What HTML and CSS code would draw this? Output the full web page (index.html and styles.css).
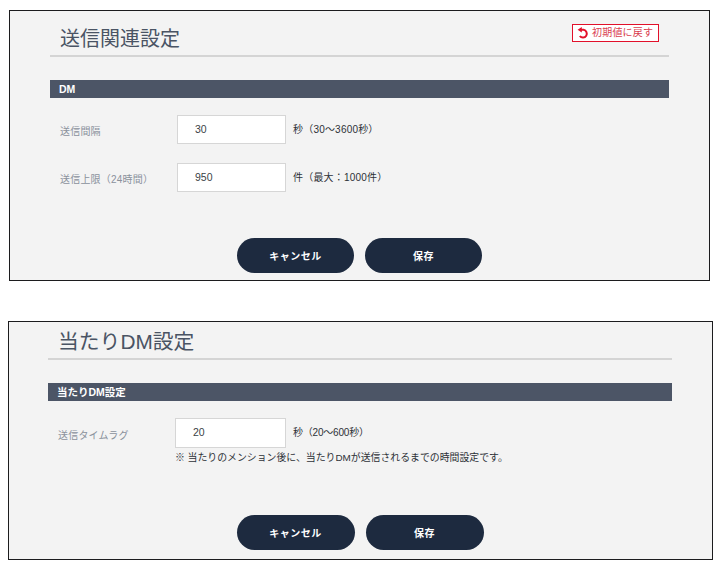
FILE: index.html
```html
<!DOCTYPE html>
<html lang="ja">
<head>
<meta charset="utf-8">
<title>送信関連設定</title>
<link rel="stylesheet" href="styles.css">
</head>
<body>
<section class="panel panel-send">
  <header class="head">
    <h1 class="title">送信関連設定</h1>
    <button class="reset" type="button">
      <svg class="reset-icon" viewBox="0 0 12 12" width="12" height="12" aria-hidden="true">
        <path d="M3.2 2.8H6.6A3.9 3.9 0 1 1 2.8 9" fill="none" stroke="currentColor" stroke-width="2"/>
        <path d="M4.8 0V5.6L.6 2.8Z" fill="currentColor"/>
      </svg>
      <span>初期値に戻す</span>
    </button>
  </header>
  <h2 class="bar">DM</h2>
  <div class="rows">
    <div class="row">
      <span class="label">送信間隔</span>
      <input class="field" type="text" value="30">
      <span class="hint">秒（30〜3600秒）</span>
    </div>
    <div class="row">
      <span class="label">送信上限（24時間）</span>
      <input class="field" type="text" value="950">
      <span class="hint">件（最大：1000件）</span>
    </div>
  </div>
  <div class="actions">
    <button class="pill" type="button">キャンセル</button>
    <button class="pill" type="button">保存</button>
  </div>
</section>

<section class="panel panel-win">
  <header class="head">
    <h1 class="title">当たりDM設定</h1>
  </header>
  <h2 class="bar">当たりDM設定</h2>
  <div class="rows">
    <div class="row">
      <span class="label">送信タイムラグ</span>
      <input class="field" type="text" value="20">
      <span class="hint">秒（20〜600秒）</span>
    </div>
    <p class="note">※ 当たりのメンション後に、当たりDMが送信されるまでの時間設定です。</p>
  </div>
  <div class="actions">
    <button class="pill" type="button">キャンセル</button>
    <button class="pill" type="button">保存</button>
  </div>
</section>
</body>
</html>
```
FILE: styles.css
```css
* { box-sizing: border-box; }
html, body { margin: 0; padding: 0; }
body {
  width: 725px;
  height: 580px;
  overflow: hidden;
  background: #fff;
  padding-top: 10px;
  font-family: "Liberation Sans", "Noto Sans CJK JP", sans-serif;
  color: #33373d;
}
.panel {
  display: flex;
  flex-direction: column;
  background: #f3f3f3;
  border: 1px solid #1c1c1e;
}
.panel-send {
  width: 701px;
  height: 271px;
  margin-left: 9px;
  padding: 0 40px;
}
.panel-win {
  width: 705px;
  height: 239px;
  margin-left: 8px;
  margin-top: 40px;
  padding: 0 40px 0 39px;
}
.head {
  display: flex;
  justify-content: space-between;
  align-items: flex-start;
  border-bottom: 2px solid #d4d4d4;
  padding-left: 10px;
  height: 46px;
}
.panel-win .head { height: 38px; }
.title {
  margin: 0;
  font-size: 20px;
  font-weight: 400;
  line-height: 28px;
  padding-top: 14px;
  color: #4a5464;
  box-sizing: content-box;
}
.panel-win .title { padding-top: 6px; font-size: 20.8px; }
.reset {
  display: flex;
  align-items: center;
  gap: 3px;
  width: 87px;
  height: 18px;
  margin: 13px 10px 0 0;
  padding: 0 0 0 4px;
  background: #fff;
  border: 1.5px solid #e2102a;
  color: #e2102a;
  font: inherit;
  font-size: 10px;
  letter-spacing: .2px;
  line-height: 1;
}
.reset-icon { flex: none; }
.reset span { color: #d9404f; }
.bar {
  margin: 23px 0 0;
  height: 18px;
  padding-left: 9px;
  background: #4c5566;
  color: #fff;
  font-size: 10.5px;
  font-weight: 700;
  line-height: 18px;
}
.rows {
  display: flex;
  flex-direction: column;
  gap: 19px;
  padding-top: 17px;
}
.panel-win .rows { gap: 3px; }
.row {
  display: flex;
  align-items: center;
  height: 29px;
}
.panel-win .row { height: 30px; }
.label {
  width: 127px;
  padding-left: 10px;
  font-size: 10px;
  letter-spacing: .2px;
  color: #8a919c;
  padding-top: 2px;
}
.field {
  width: 109px;
  height: 100%;
  padding: 0 0 2px 17px;
  border: 1px solid #d6d6d6;
  background: #fff;
  color: #3a3f46;
  font-family: "Liberation Sans", sans-serif;
  font-size: 10.5px;
  outline: none;
}
.panel-win .field { width: 111px; }
.hint {
  margin-left: 7px;
  font-size: 10px;
  letter-spacing: .2px;
  color: #2d3137;
  padding-bottom: 3px;
}
.panel-win .hint { letter-spacing: -.2px; }
.note {
  margin: 0 0 0 127px;
  font-size: 9.9px;
  line-height: 14px;
  color: #2d3137;
}
.actions {
  display: flex;
  justify-content: center;
  gap: 11px;
  margin-top: auto;
  padding-bottom: 7px;
}
.panel-win .actions { padding-bottom: 9px; }
.pill {
  width: 117px;
  height: 35px;
  border: 0;
  border-radius: 18px;
  background: #1d2a3f;
  color: #fff;
  font: inherit;
  font-size: 10px;
  font-weight: 700;
  letter-spacing: .5px;
}
.panel-win .pill { width: 118px; }
```
